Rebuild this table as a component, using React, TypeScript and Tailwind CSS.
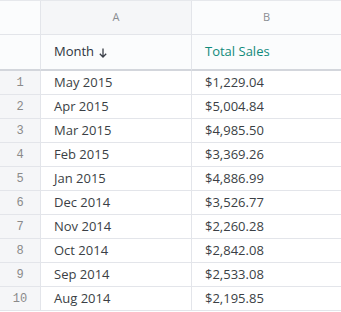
import React from "react";

const rows: [string, string][] = [
  ["May 2015", "$1,229.04"],
  ["Apr 2015", "$5,004.84"],
  ["Mar 2015", "$4,985.50"],
  ["Feb 2015", "$3,369.26"],
  ["Jan 2015", "$4,886.99"],
  ["Dec 2014", "$3,526.77"],
  ["Nov 2014", "$2,260.28"],
  ["Oct 2014", "$2,842.08"],
  ["Sep 2014", "$2,533.08"],
  ["Aug 2014", "$2,195.85"],
];

export default function App() {
  return (
    <div
      className="w-[341px] h-[312px] overflow-hidden bg-white border-t border-[#e6e8ec]"
      style={{ fontFamily: '"Open Sans", "Noto Sans", sans-serif' }}
    >
      <div className="grid grid-cols-[41px_151px_149px]">
        {/* header letters */}
        <div className="h-[34px] border-r border-b border-[#e3e5ea] bg-[#fbfcfd]" />
        <div className="h-[34px] border-r border-b border-[#e3e5ea] bg-[#f5f6f8] flex items-center justify-center text-[11px] text-[#8a8d93]">
          A
        </div>
        <div className="h-[34px] border-b border-[#e3e5ea] bg-[#fbfcfd] flex items-center justify-center text-[11px] text-[#8a8d93]">
          B
        </div>
        {/* header names */}
        <div className="h-[36px] border-r border-[#e3e5ea] border-b-2 border-b-[#d3d6dc] bg-[#fbfcfd]" />
        <div className="h-[36px] border-r border-[#e3e5ea] border-b-2 border-b-[#d3d6dc] bg-[#fbfcfd] flex items-center pl-[13px] text-[13px] text-[#2e3440]">
          Month
          <svg width="10" height="12" viewBox="0 0 10 12" className="ml-[4px] mt-[1px]">
            <path d="M5 1.5 V10 M1.8 6.8 L5 10 L8.2 6.8" stroke="#3a3f48" strokeWidth="1.3" fill="none" />
          </svg>
        </div>
        <div className="h-[36px] border-b-2 border-b-[#d3d6dc] bg-[#fbfcfd] flex items-center pl-[13px] text-[13px] text-[#108a7b]">
          Total Sales
        </div>
        {rows.map(([m, s], i) => (
          <React.Fragment key={i}>
            <div
              className="h-[24px] border-r border-b border-[#e3e5ea] bg-[#f5f6f8] flex items-center justify-center text-[12px] text-[#8a8a8a]"
              style={{ fontFamily: '"Liberation Mono", monospace' }}
            >
              {i + 1}
            </div>
            <div className="h-[24px] border-r border-b border-[#e3e5ea] flex items-center pl-[13px] text-[13px] text-[#3b3f45]">
              {m}
            </div>
            <div className="h-[24px] border-b border-[#e3e5ea] flex items-center pl-[13px] text-[13px] text-[#3b3f45]">
              {s}
            </div>
          </React.Fragment>
        ))}
      </div>
    </div>
  );
}
